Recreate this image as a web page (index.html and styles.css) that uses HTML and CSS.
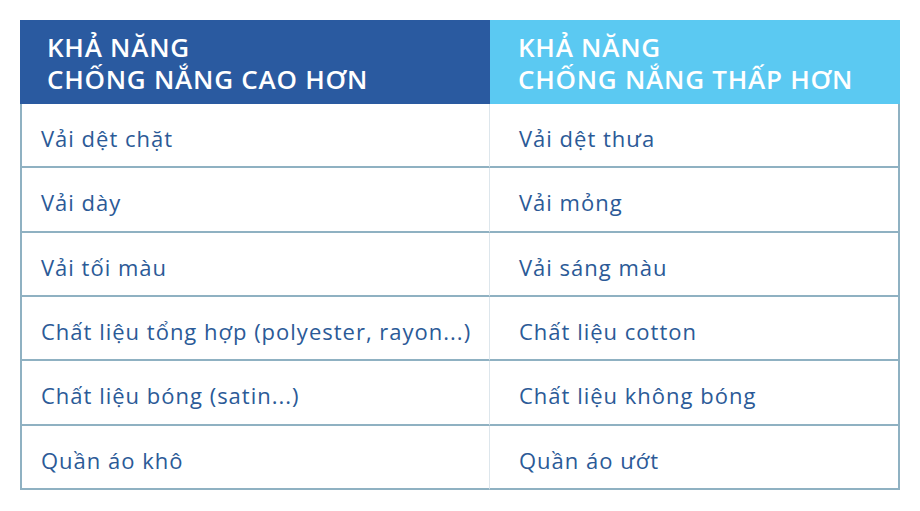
FILE: index.html
```html
<!DOCTYPE html>
<html lang="vi">
<head>
<meta charset="utf-8">
<link rel="stylesheet" href="styles.css">
</head>
<body>
<div class="table">
  <div class="head head-high"><span class="line">KHẢ NĂNG</span><span class="line">CHỐNG NẮNG CAO HƠN</span></div>
  <div class="head head-low"><span class="line">KHẢ NĂNG</span><span class="line">CHỐNG NẮNG THẤP HƠN</span></div>
  <div class="cell left">Vải dệt chặt</div>
  <div class="cell right">Vải dệt thưa</div>
  <div class="cell left">Vải dày</div>
  <div class="cell right">Vải mỏng</div>
  <div class="cell left">Vải tối màu</div>
  <div class="cell right">Vải sáng màu</div>
  <div class="cell left">Chất liệu tổng hợp (polyester, rayon...)</div>
  <div class="cell right">Chất liệu cotton</div>
  <div class="cell left">Chất liệu bóng (satin...)</div>
  <div class="cell right">Chất liệu không bóng</div>
  <div class="cell left">Quần áo khô</div>
  <div class="cell right">Quần áo ướt</div>
</div>
</body>
</html>
```
FILE: styles.css
```css
html, body {
  margin: 0;
  padding: 0;
  background: #ffffff;
}
body {
  padding: 20px 20px 0 20px;
  font-family: "Open Sans", "Noto Sans", sans-serif;
}
.table {
  display: grid;
  grid-template-columns: 470px 410px;
  grid-template-rows: 84px repeat(6, 64.33px);
  width: 880px;
}
.head {
  color: #ffffff;
  font-weight: 600;
  font-size: 26px;
  letter-spacing: 0.75px;
  line-height: 32px;
  display: flex;
  flex-direction: column;
  justify-content: center;
  padding-left: 27px;
  padding-top: 1px;
  box-sizing: border-box;
}
.line {
  display: block;
  height: 32px;
  line-height: 32px;
}
.head-high {
  background: #2a5aa0;
}
.head-low {
  background: #5bc9f2;
  padding-left: 28px;
}
.cell {
  color: #2b5a97;
  font-size: 22px;
  letter-spacing: 1px;
  display: flex;
  align-items: center;
  padding-top: 6px;
  border-bottom: 2px solid #8fb1c2;
  box-sizing: border-box;
}
.left {
  padding-left: 19px;
  border-left: 2px solid #8fb1c2;
  border-right: 1px solid #dde6ec;
}
.right {
  padding-left: 29px;
  border-right: 2px solid #8fb1c2;
}
```
